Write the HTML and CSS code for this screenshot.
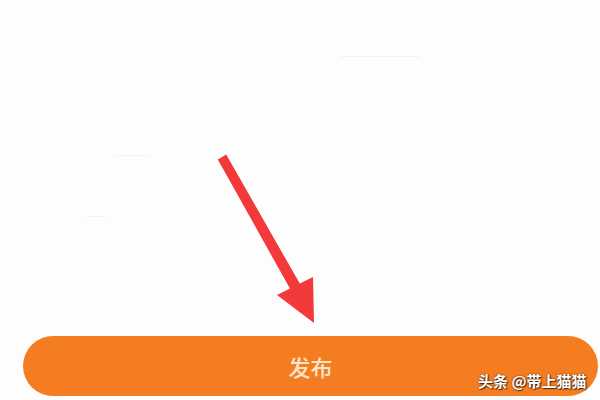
FILE: index.html
```html
<!DOCTYPE html>
<html lang="zh">
<head>
<meta charset="utf-8">
<link rel="stylesheet" href="styles.css">
</head>
<body>
<div class="page">
  <div class="ghost ghost-a"></div>
  <div class="ghost ghost-b"></div>
  <div class="ghost ghost-c"></div>
  <svg class="arrow" width="600" height="400" viewBox="0 0 600 400">
    <polygon points="226.2,154.6 299.8,283.6 313,277 314,323 277,295 289.9,288.5 217.8,159.4" fill="#f23a3b"/>
  </svg>
  <div class="publish">发布</div>
  <div class="watermark">头条 @带上猫猫</div>
</div>
</body>
</html>
```
FILE: styles.css
```css
html, body {
  margin: 0;
  padding: 0;
  background: #fdfdfe;
}
.page {
  position: relative;
  width: 600px;
  height: 400px;
  overflow: hidden;
  display: flex;
  flex-direction: column;
  justify-content: flex-end;
  padding: 0 2px 4px 23px;
  box-sizing: border-box;
  font-family: "Noto Sans CJK SC", "Noto Sans", sans-serif;
}
.publish {
  height: 60px;
  border-radius: 30px;
  background: #f57d21;
  color: #fde4cc;
  font-size: 22px;
  font-weight: 500;
  display: flex;
  align-items: center;
  justify-content: center;
  letter-spacing: 0;
}
.arrow {
  position: absolute;
  left: 0;
  top: 0;
}
.ghost {
  position: absolute;
  height: 1px;
  background: #f3f3f5;
}
.ghost-a { left: 340px; top: 56px; width: 80px; }
.ghost-b { left: 115px; top: 155px; width: 35px; }
.ghost-c { left: 85px; top: 216px; width: 20px; }
.watermark {
  position: absolute;
  left: 478px;
  top: 370px;
  font-size: 15px;
  font-weight: 700;
  color: #ffffff;
  text-shadow: 0 0 2px rgba(0,0,0,0.7), 1px 1px 1px rgba(0,0,0,0.6);
  white-space: nowrap;
}
```
